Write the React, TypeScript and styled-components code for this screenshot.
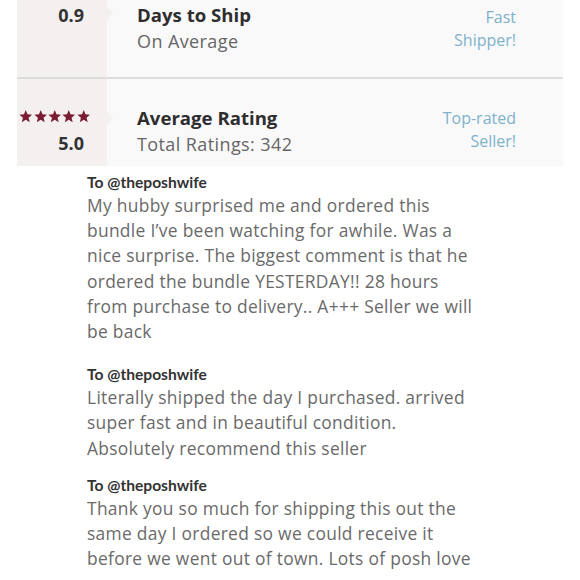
import React from 'react';
import styled, { createGlobalStyle } from 'styled-components';

const GlobalStyle = createGlobalStyle`
  body {
    margin: 0;
    background: #ffffff;
    font-family: 'Open Sans', 'Liberation Sans', sans-serif;
  }
`;

const Page = styled.div`
  width: 580px;
  height: 580px;
  overflow: hidden;
`;

const StatsCard = styled.div`
  margin-left: 17px;
  width: 546px;
  background: #faf9fa;
`;

const StatRow = styled.div<{ height: number; divider?: boolean }>`
  display: flex;
  height: ${(p) => p.height}px;
  border-bottom: ${(p) => (p.divider ? '2px solid #dedcdd' : 'none')};
  box-sizing: border-box;
`;

const Score = styled.div<{ top: number }>`
  position: relative;
  width: 90px;
  flex-shrink: 0;
  background: #f4f0ef;
  display: flex;
  flex-direction: column;
  align-items: flex-end;
  padding: ${(p) => p.top}px 23px 0 0;
  box-sizing: border-box;

  &::after {
    content: '';
    position: absolute;
    right: -6px;
    top: ${(p) => p.top + 3}px;
    border-top: 7px solid transparent;
    border-bottom: 7px solid transparent;
    border-left: 6px solid #f4f0ef;
  }
`;

const Stars = styled.div`
  display: flex;
  gap: 0.8px;
  margin-right: -6px;
  margin-bottom: 7px;
  height: 16px;
  align-items: center;
`;

const Number = styled.div`
  font-size: 18px;
  font-weight: 700;
  color: #333333;
  line-height: 24px;
`;

const Info = styled.div<{ top: number }>`
  flex: 1;
  padding: ${(p) => p.top}px 0 0 30px;
`;

const Title = styled.div`
  font-size: 18.6px;
  font-weight: 700;
  color: #2e2e2e;
  line-height: 26px;
`;

const Subtitle = styled.div`
  font-size: 18px;
  letter-spacing: 0.4px;
  color: #666666;
  line-height: 26px;
`;

const Badge = styled.div<{ top: number }>`
  width: 160px;
  text-align: right;
  padding: ${(p) => p.top}px 47px 0 0;
  font-size: 16px;
  line-height: 23px;
  color: #7db2cb;
`;

const Reviews = styled.div`
  padding: 5px 0 0 87px;
`;

const Review = styled.div<{ after: number }>`
  margin-bottom: ${(p) => p.after}px;
`;

const Recipient = styled.div`
  font-family: Lato, 'Open Sans', sans-serif;
  font-size: 15.6px;
  font-weight: 700;
  color: #333333;
  line-height: 22px;
`;

const Body = styled.div`
  font-size: 17.4px;
  letter-spacing: 0.3px;
  color: #6a6a6a;
  line-height: 25.2px;
  white-space: nowrap;
`;

const Star = () => (
  <svg width="13.5" height="13" viewBox="0 0 24 23">
    <path
      d="M12 0l3.1 7.6 8.2.6-6.3 5.3 2 8L12 17.2 5 21.5l2-8L.7 8.2l8.2-.6z"
      fill="#7a1d33"
    />
  </svg>
);

const reviews = [
  {
    after: 19,
    lines: [
      'My hubby surprised me and ordered this',
      'bundle I\u2019ve been watching for awhile. Was a',
      'nice surprise. The biggest comment is that he',
      'ordered the bundle YESTERDAY!! 28 hours',
      'from purchase to delivery.. A+++ Seller we will',
      'be back',
    ],
  },
  {
    after: 13,
    lines: [
      'Literally shipped the day I purchased. arrived',
      'super fast and in beautiful condition.',
      'Absolutely recommend this seller',
    ],
  },
  {
    after: 0,
    lines: [
      'Thank you so much for shipping this out the',
      'same day I ordered so we could receive it',
      'before we went out of town. Lots of posh love',
    ],
  },
];

export default function App() {
  return (
    <Page>
      <GlobalStyle />
      <StatsCard>
        <StatRow height={79} divider>
          <Score top={3}>
            <Number>0.9</Number>
          </Score>
          <Info top={2}>
            <Title>Days to Ship</Title>
            <Subtitle>On Average</Subtitle>
          </Info>
          <Badge top={6}>
            Fast
            <br />
            Shipper!
          </Badge>
        </StatRow>
        <StatRow height={87}>
          <Score top={29}>
            <Stars>
              {[0, 1, 2, 3, 4].map((i) => (
                <Star key={i} />
              ))}
            </Stars>
            <Number>5.0</Number>
          </Score>
          <Info top={26}>
            <Title>Average Rating</Title>
            <Subtitle>Total Ratings: 342</Subtitle>
          </Info>
          <Badge top={28}>
            Top-rated
            <br />
            Seller!
          </Badge>
        </StatRow>
      </StatsCard>
      <Reviews>
        {reviews.map((r, i) => (
          <Review key={i} after={r.after}>
            <Recipient>To @theposhwife</Recipient>
            <Body>
              {r.lines.map((l, j) => (
                <div key={j}>{l}</div>
              ))}
            </Body>
          </Review>
        ))}
      </Reviews>
    </Page>
  );
}
